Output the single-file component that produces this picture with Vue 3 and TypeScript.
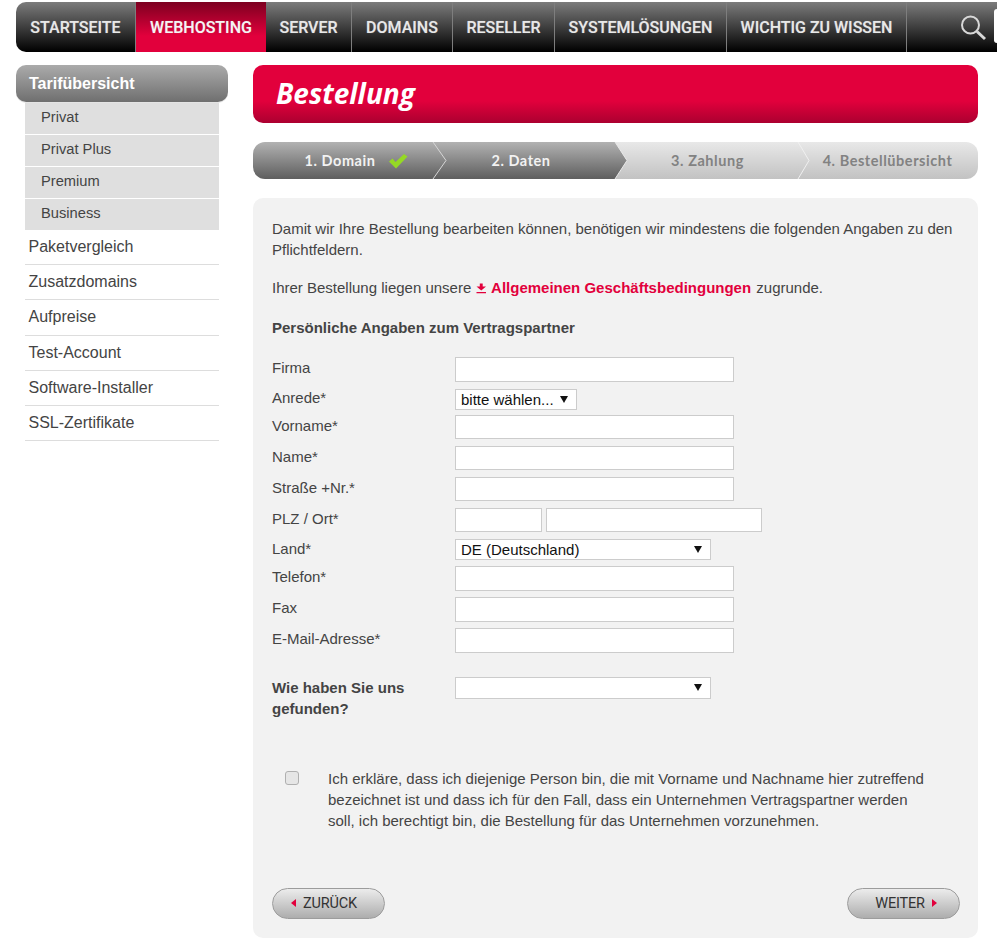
<script setup lang="ts">
const navItems = [
  { label: 'STARTSEITE', width: 120 },
  { label: 'WEBHOSTING', width: 130, active: true },
  { label: 'SERVER', width: 86 },
  { label: 'DOMAINS', width: 101 },
  { label: 'RESELLER', width: 102 },
  { label: 'SYSTEMLÖSUNGEN', width: 172 },
  { label: 'WICHTIG ZU WISSEN', width: 180 },
]
const subItems = ['Privat', 'Privat Plus', 'Premium', 'Business']
const links = ['Paketvergleich', 'Zusatzdomains', 'Aufpreise', 'Test-Account', 'Software-Installer', 'SSL-Zertifikate']
</script>

<template>
  <div class="page">
    <nav class="nav">
      <a
        v-for="item in navItems"
        :key="item.label"
        class="nav-item"
        :class="{ active: item.active }"
        :style="{ width: item.width + 'px' }"
      >{{ item.label }}</a>
      <div class="nav-search">
        <svg width="30" height="30" viewBox="0 0 30 30" fill="none" stroke="#d8d8d8">
          <circle cx="11.5" cy="11" r="8.5" stroke-width="2" />
          <path d="M18 17.5 L26 25" stroke-width="3" />
        </svg>
        <span class="search-box"></span>
      </div>
    </nav>

    <div class="columns">
      <aside class="side">
        <div class="side-head">Tarifübersicht</div>
        <ul class="sub">
          <li v-for="s in subItems" :key="s">{{ s }}</li>
        </ul>
        <ul class="links">
          <li v-for="l in links" :key="l">{{ l }}</li>
        </ul>
      </aside>

      <main class="main">
        <div class="banner"><h1>Bestellung</h1></div>

        <div class="steps">
          <div class="step dark s1">
            <span>1. Domain</span>
            <svg class="check" width="20" height="16" viewBox="0 0 20 16">
              <path d="M1 8.5 L4.5 5.5 L7.5 9 L16 1 L19.5 3.5 L8 15.5 Z" fill="#95d924" />
            </svg>
            <svg class="chev" width="16" height="37" viewBox="0 0 16 37" fill="none">
              <path d="M1 0 L14 18.5 L1 37" stroke="#d6d6d6" stroke-width="1" />
            </svg>
          </div>
          <div class="step dark s2">
            <span>2. Daten</span>
            <svg class="tip" width="14" height="37" viewBox="0 0 14 37">
              <defs>
                <linearGradient id="tipgrad" x1="0" y1="0" x2="0" y2="1">
                  <stop offset="0" stop-color="#b2b2b2" />
                  <stop offset="1" stop-color="#5e5e5e" />
                </linearGradient>
              </defs>
              <path d="M0 0 L1 0 L13 18.5 L1 37 L0 37 Z" fill="url(#tipgrad)" />
              <path d="M1 0 L13 18.5 L1 37" stroke="#e8e8e8" fill="none" />
            </svg>
          </div>
          <div class="step light s3">
            <span>3. Zahlung</span>
            <svg class="chev c3" width="14" height="37" viewBox="0 0 14 37" fill="none">
              <path d="M1 0 L12 18.5 L1 37" stroke="#f0f0f0" stroke-width="1" />
            </svg>
          </div>
          <div class="step light s4"><span>4. Bestellübersicht</span></div>
        </div>

        <section class="panel">
          <p class="intro">Damit wir Ihre Bestellung bearbeiten können, benötigen wir mindestens die folgenden Angaben zu den Pflichtfeldern.</p>
          <p class="terms">
            Ihrer Bestellung liegen unsere
            <a class="agb"><svg width="11" height="11" viewBox="0 0 11 11"><path d="M3.8 0.5 H6.7 V3.5 H10 L5.25 7.5 L0.5 3.5 H3.8 Z M0.5 9 H10 V10.2 H0.5 Z" fill="#e2003c" /></svg> Allgemeinen Geschäftsbedingungen</a>
            zugrunde.
          </p>
          <h2>Persönliche Angaben zum Vertragspartner</h2>

          <div class="form">
            <div class="row r-firma"><label>Firma</label><input class="field" type="text" /></div>
            <div class="row r-anrede">
              <label>Anrede*</label>
              <div class="sel sel-small"><select><option>bitte wählen...</option></select></div>
            </div>
            <div class="row r-vorname"><label>Vorname*</label><input class="field" type="text" /></div>
            <div class="row r-std"><label>Name*</label><input class="field" type="text" /></div>
            <div class="row r-std"><label>Straße +Nr.*</label><input class="field" type="text" /></div>
            <div class="row r-std">
              <label>PLZ / Ort*</label>
              <input class="field plz" type="text" />
              <input class="field ort" type="text" />
            </div>
            <div class="row r-land">
              <label>Land*</label>
              <div class="sel sel-wide"><select><option>DE (Deutschland)</option></select></div>
            </div>
            <div class="row r-telefon"><label>Telefon*</label><input class="field" type="text" /></div>
            <div class="row r-std"><label>Fax</label><input class="field" type="text" /></div>
            <div class="row r-std"><label>E-Mail-Adresse*</label><input class="field" type="text" /></div>
            <div class="row r-wie">
              <label class="strong">Wie haben Sie uns gefunden?</label>
              <div class="sel sel-wide"><select><option></option></select></div>
            </div>
          </div>

          <div class="consent">
            <span class="box"><input type="checkbox" /></span>
            <p>Ich erkläre, dass ich diejenige Person bin, die mit Vorname und Nachname hier zutreffend bezeichnet ist und dass ich für den Fall, dass ein Unternehmen Vertragspartner werden soll, ich berechtigt bin, die Bestellung für das Unternehmen vorzunehmen.</p>
          </div>

          <div class="actions">
            <button class="btn back" type="button"><i class="arr left"></i>ZURÜCK</button>
            <button class="btn next" type="button">WEITER<i class="arr right"></i></button>
          </div>
        </section>
      </main>
    </div>
  </div>
</template>

<style>
html, body { margin: 0; background: #fff; overflow: hidden; }
</style>

<style scoped>
* { box-sizing: border-box; }
.page {
  width: 997px;
  height: 942px;
  overflow: hidden;
  padding: 2px 0 0 16px;
  font-family: "Liberation Sans", Arial, sans-serif;
  font-size: 15px;
  color: #444;
}
.nav {
  display: flex;
  height: 50px;
  width: 1000px;
  background: linear-gradient(#7c7c7c, #000);
  border-radius: 10px 0 0 10px;
}
.nav-item {
  flex: none;
  display: flex;
  align-items: center;
  justify-content: center;
  border-right: 1px solid #7e7e7e;
  color: #e8e8e8;
  font-family: Roboto, sans-serif;
  font-weight: 500;
  font-size: 16px;
  text-shadow: 0 0 1px rgba(255,255,255,.4);
}
.nav-item:first-child { border-radius: 10px 0 0 10px; }
.nav-item.active {
  color: #f4f4f4;
  border-right: 0;
  background: linear-gradient(#7d0020, #e2003c 68%);
}
.nav-search {
  flex: 1;
  display: flex;
  align-items: flex-start;
  padding: 12px 0 0 52px;
  position: relative;
}
.search-box {
  position: absolute;
  left: 87px;
  top: 7px;
  width: 20px;
  height: 34px;
  background: #fff;
  border-radius: 3px 0 0 3px;
}
.columns {
  display: flex;
  margin-top: 13px;
}
.side { width: 212px; flex: none; }
.side-head {
  height: 37px;
  line-height: 38px;
  padding-left: 13px;
  background: linear-gradient(#ababab, #6f6f6f);
  border-radius: 10px;
  box-shadow: 0 1px 0 #e4e4e4;
  color: #fff;
  font-weight: 700;
  font-size: 16px;
}
ul { list-style: none; margin: 0; padding: 0; }
.sub { margin: 1px 0 0 9px; width: 194px; }
.sub li {
  height: 32px;
  line-height: 29px;
  padding-left: 16px;
  background: #dfdfdf;
  border-bottom: 1px solid #fff;
  font-size: 14.7px;
}
.links { margin: -1px 0 0 9px; width: 194px; }
.links li {
  height: 35.2px;
  line-height: 34px;
  padding-left: 3.5px;
  border-bottom: 1px solid #ddd;
  font-size: 16px;
}
.main { width: 725px; margin-left: 25px; flex: none; }
.banner {
  height: 58px;
  background: linear-gradient(#e2003c 62%, #ab0030);
  border-radius: 10px;
  padding-left: 23px;
}
.banner h1 {
  margin: 0;
  color: #fff;
  font-family: "Open Sans", sans-serif;
  font-weight: 700;
  font-style: italic;
  font-size: 28px;
  line-height: 56px;
}
.steps {
  display: flex;
  height: 37px;
  margin-top: 19px;
  border-radius: 12px;
  overflow: hidden;
}
.step {
  position: relative;
  display: flex;
  align-items: center;
  justify-content: center;
  font-family: Lato, sans-serif;
  font-weight: 700;
  font-size: 14.5px;
  letter-spacing: .55px;
}
.dark { background: linear-gradient(#b2b2b2, #5e5e5e); color: #f2f2f2; }
.light { background: linear-gradient(#e8e8e8, #c2c2c2); color: #828282; }
.s1 { width: 180px; padding-left: 27px; }
.s2 { width: 182px; padding-right: 6px; }
.s3 { width: 182px; padding-left: 3px; }
.s4 { width: 181px; }
.check { margin-left: 13px; }
.chev { position: absolute; right: -15px; top: 0; z-index: 2; }
.chev.c3 { right: -14px; }
.tip { position: absolute; right: -13px; top: 0; z-index: 2; }
.panel {
  margin-top: 19px;
  height: 740px;
  background: #f2f2f2;
  border-radius: 10px;
  padding: 20px 18px 0 19px;
}
p { margin: 0; }
.intro { line-height: 21px; width: 690px; }
.terms { margin-top: 17px; line-height: 21px; }
.agb { color: #e2003c; font-weight: 700; margin: 0 1px; }
.agb svg { vertical-align: -1px; }
h2 { margin: 19px 0 0; font-size: 15px; line-height: 21px; color: #444; }
.form { margin-top: 19px; }
.row { display: flex; align-items: center; }
.row label { width: 183px; flex: none; margin-bottom: 3px; }
.field {
  width: 279px;
  height: 24.5px;
  border: 1px solid #ccc;
  background: #fff;
  padding: 0 5px;
  outline: 0;
  margin: 0;
}
.plz { width: 87px; }
.ort { width: 216px; margin-left: 4px; }
.r-std { margin-top: 6.5px; }
.r-anrede { margin-top: 7px; }
.r-vorname { margin-top: 5px; }
.r-land { margin-top: 7px; }
.r-telefon { margin-top: 6px; }
.r-wie { margin-top: 24px; align-items: flex-start; }
.row .strong { font-weight: 700; line-height: 21px; width: 148px; margin-right: 35px; margin-bottom: 0; }
.sel { position: relative; background: #fff; border: 1px solid #ccc; height: 21px; }
.sel::after {
  content: "";
  position: absolute;
  right: 8px;
  top: 6px;
  border-left: 4px solid transparent;
  border-right: 4px solid transparent;
  border-top: 7px solid #111;
  pointer-events: none;
}
.sel select {
  appearance: none;
  display: block;
  width: 100%;
  height: 100%;
  border: 0;
  background: transparent;
  padding: 0 0 0 5px;
  font-family: inherit;
  font-size: 15px;
  color: #111;
  outline: 0;
}
.sel-small { width: 122px; }
.sel-wide { width: 256px; }
.r-wie .sel { height: 22px; }
.consent { display: flex; margin-top: 52px; }
.box { width: 56px; flex: none; padding-left: 13px; }
.box input {
  appearance: none;
  display: block;
  width: 14px;
  height: 14px;
  margin: 0;
  border: 1px solid #b0b0b0;
  border-radius: 3px;
  background: #e6e6e6;
}
.consent p { width: 600px; line-height: 21.4px; margin-top: -3px; }
.actions {
  display: flex;
  justify-content: space-between;
  margin-top: 56px;
}
.btn {
  width: 113px;
  height: 31px;
  border: 1px solid #9c9c9c;
  border-radius: 16px;
  background: linear-gradient(#ececec, #adadad);
  display: flex;
  align-items: center;
  justify-content: center;
  gap: 7px;
  padding: 0;
  font-family: Roboto, sans-serif;
  font-size: 14.5px;
  letter-spacing: -.2px;
  color: #333;
}
.back { padding-right: 9px; }
.next { padding-left: 5px; }
.arr { width: 0; height: 0; border-top: 4.5px solid transparent; border-bottom: 4.5px solid transparent; }
.arr.left { border-right: 5px solid #e2003c; }
.arr.right { border-left: 5px solid #e2003c; }
</style>
